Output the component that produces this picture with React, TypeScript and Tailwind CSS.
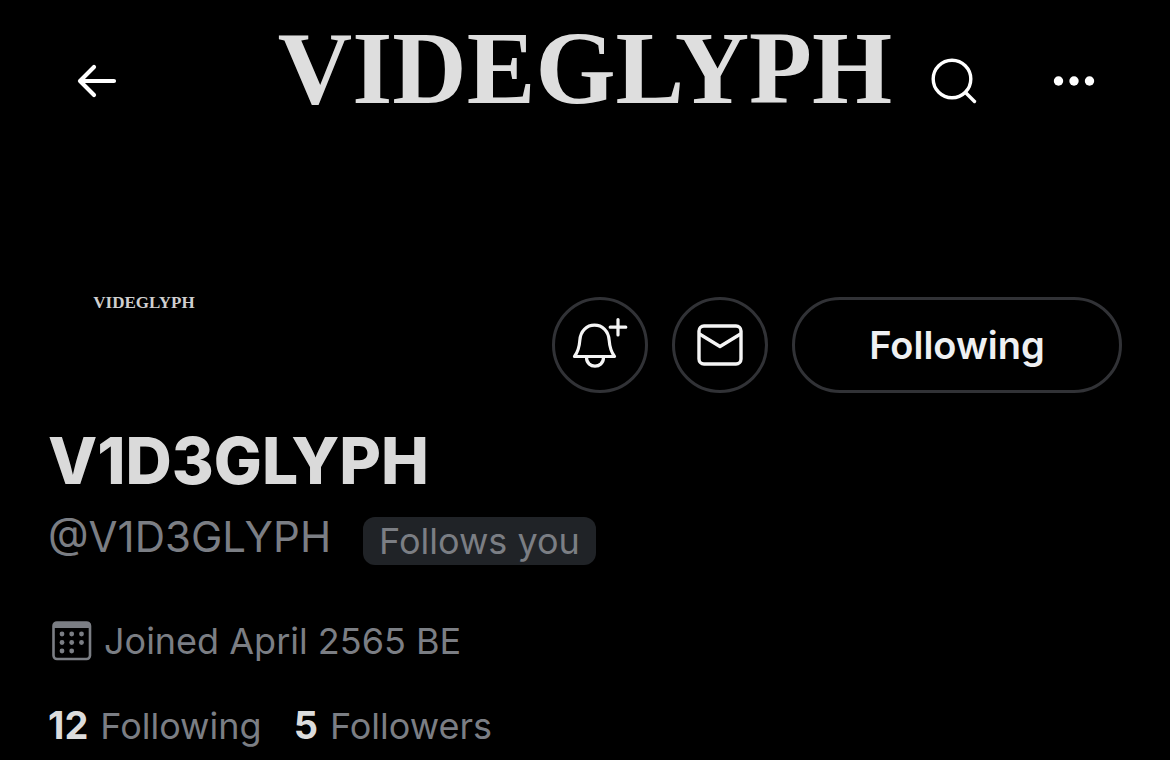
import type { ReactNode } from "react";

const BackIcon = () => (
  <svg width="40" height="34" viewBox="0 0 40 34" fill="none" stroke="currentColor" strokeWidth="4.200" strokeLinecap="round" strokeLinejoin="round" aria-hidden="true">
    <path d="M17 3 3 17 17 31M3 17h34" />
  </svg>
);

const SearchIcon = () => (
  <svg width="46" height="46" viewBox="0 0 46 46" fill="none" stroke="currentColor" strokeWidth="3.400" strokeLinecap="round" aria-hidden="true">
    <circle cx="21" cy="21" r="18.800" />
    <path d="M34.500 34.500 43.500 43.500" />
  </svg>
);

const MoreIcon = () => (
  <svg width="42" height="12" viewBox="0 0 42 12" fill="currentColor" aria-hidden="true">
    <circle cx="5.500" cy="6" r="4.700" />
    <circle cx="21" cy="6" r="4.700" />
    <circle cx="36.500" cy="6" r="4.700" />
  </svg>
);

const BellIcon = () => (
  <svg width="90" height="90" viewBox="0 0 90 90" fill="none" stroke="currentColor" strokeWidth="3.200" strokeLinecap="round" strokeLinejoin="round" aria-hidden="true">
    <path d="M19.500 56.500C23.500 51 24.300 47.500 24.800 40.500C25.500 30.500 32 25.200 39.500 25.200S53.500 30.500 54.200 40.500C54.700 47.500 55.500 51 59.500 56.500Z" />
    <path d="M31.500 57.500c0 11.500 17 11.500 17 0M63 19.500v15.500M55.200 27.200h15.600" />
  </svg>
);

const MailIcon = () => (
  <svg width="46" height="42" viewBox="0 0 46 42" fill="none" stroke="currentColor" strokeWidth="3.400" strokeLinejoin="round" aria-hidden="true">
    <rect x="2" y="2" width="42" height="38" rx="5" />
    <path d="M2.500 10 23 22.500 43.500 10" />
  </svg>
);

const CalendarIcon = () => (
  <svg width="40" height="40" viewBox="0 0 40 40" fill="currentColor" aria-hidden="true">
    <rect x="1.500" y="1.500" width="36.500" height="36.500" rx="3.500" fill="none" stroke="currentColor" strokeWidth="2.600" />
    <path d="M1 7V4a4 4 0 0 1 4-3h30a4 4 0 0 1 4 3v3z" />
    {[13, 21.500, 30].map((y) =>
      [10, 19.700, 29.500].map((x) => (y === 30 && x > 29 ? null : <circle key={`${x}-${y}`} cx={x} cy={y} r="2.400" />))
    )}
  </svg>
);

function RoundButton({ label, children }: { label: string; children: ReactNode }) {
  return (
    <button
      type="button"
      aria-label={label}
      className="flex size-24 items-center justify-center rounded-full border-3 border-[#313236] text-[#f5f5f5]"
    >
      {children}
    </button>
  );
}

function Stat({ value, label }: { value: number; label: string }) {
  return (
    <a href="#" className="flex items-baseline gap-3">
      <span className="text-[38px] font-bold text-[#dcdcdc]">{value}</span>
      {label}
    </a>
  );
}

export default function App() {
  return (
    <div className="min-h-screen bg-black font-['Inter',sans-serif] text-[36px] leading-12 text-[#7b7e84]">
      <header className="grid grid-cols-[1fr_auto_1fr] pt-3 text-white">
        <button type="button" aria-label="Back" className="mt-13 ml-[77px] h-[34px] w-10">
          <BackIcon />
        </button>
        <div className="font-['Liberation_Serif',serif] text-[103px] leading-28 font-bold text-[#dedede]">VIDEGLYPH</div>
        <div className="flex h-[138px] items-center justify-end gap-19 pr-[75px]">
          <button type="button" aria-label="Search">
            <SearchIcon />
          </button>
          <button type="button" aria-label="More">
            <MoreIcon />
          </button>
        </div>
      </header>

      <main className="px-12 pt-[147px]">
        <div className="flex items-start">
          <div className="w-48 text-center font-['Liberation_Serif',serif] text-[17px] leading-3 font-bold text-[#cfcfcf]">
            VIDEGLYPH
          </div>
          <div className="ml-auto flex gap-6">
            <RoundButton label="Notifications">
              <BellIcon />
            </RoundButton>
            <RoundButton label="Message">
              <MailIcon />
            </RoundButton>
            <button
              type="button"
              className="h-24 w-[330px] rounded-full border-3 border-[#313236] text-[38px] font-semibold text-[#eff0f2]"
            >
              Following
            </button>
          </div>
        </div>

        <h1 className="mt-7 text-[64px] leading-20 font-extrabold text-[#dadada]">V1D3GLYPH</h1>
        <div className="mt-3 flex gap-8">
          <span className="text-[42px]">@V1D3GLYPH</span>
          <span className="mt-1 rounded-xl bg-[#202327] px-4">Follows you</span>
        </div>

        <div className="mt-13 flex items-center gap-3 pl-1">
          <CalendarIcon />
          <span>Joined April 2565 BE</span>
        </div>

        <div className="mt-9 flex gap-8">
          <Stat value={12} label="Following" />
          <Stat value={5} label="Followers" />
        </div>
      </main>
    </div>
  );
}
